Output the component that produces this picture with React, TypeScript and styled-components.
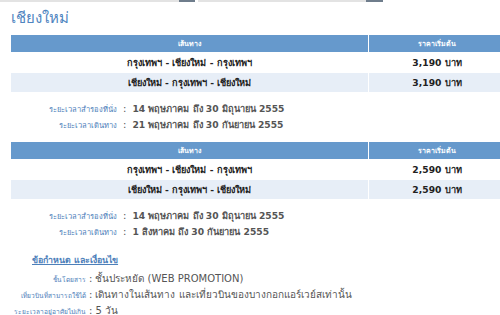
import React from 'react';
import styled, { createGlobalStyle } from 'styled-components';

const GlobalStyle = createGlobalStyle`
  html, body {
    margin: 0;
    padding: 0;
    background: #ffffff;
    overflow: hidden;
  }
  body {
    font-family: "DejaVu Sans", "Noto Sans", sans-serif;
    font-size: 10px;
    color: #555555;
  }
`;

const TopStrip = styled.div`
  display: flex;
  height: 2px;
`;

const StripField = styled.div<{ $w: number; $ml?: number }>`
  width: ${(p) => p.$w}px;
  margin-left: ${(p) => p.$ml || 0}px;
  background: #e3e3e3;
`;

const StripButton = styled.div<{ $w: number }>`
  width: ${(p) => p.$w}px;
  background: #6f7d8c;
`;

const Page = styled.div`
  width: 520px;
  padding-left: 11px;
`;

const Title = styled.h1`
  margin: 2px 0 1px;
  font-size: 15px;
  line-height: 29px;
  font-weight: normal;
  color: #4f85c0;
`;

const FareTable = styled.table`
  border-collapse: separate;
  border-spacing: 1px;
  margin-left: -1px;
  width: 496px;
`;

const HeadCell = styled.th<{ $w?: number }>`
  background: #6699cc;
  color: #ffffff;
  font-size: 7px;
  font-weight: bold;
  height: 17px;
  line-height: 12px;
  padding: 0;
  text-align: center;
  width: ${(p) => (p.$w ? `${p.$w}px` : 'auto')};
`;

const Row = styled.tr<{ $alt?: boolean }>`
  background: ${(p) => (p.$alt ? '#e7eef7' : '#ffffff')};
`;

const Cell = styled.td`
  height: 19px;
  line-height: 14px;
  padding: 0;
  text-align: center;
  font-weight: bold;
  font-size: 9.2px;
  color: #222222;
`;

const InfoGrid = styled.div<{ $labelW: number; $row: number }>`
  display: grid;
  grid-template-columns: ${(p) => p.$labelW}px auto 1fr;
  grid-auto-rows: ${(p) => p.$row}px;
  align-items: baseline;
  line-height: ${(p) => p.$row}px;
  margin: 8px 0 8px;
`;

const Label = styled.div<{ $size: number }>`
  text-align: right;
  color: #4d80ba;
  font-size: ${(p) => p.$size}px;
  white-space: nowrap;
`;

const Colon = styled.div<{ $pad: number }>`
  padding: 0 ${(p) => p.$pad}px;
  color: #555555;
`;

const Value = styled.div<{ $bold?: boolean }>`
  color: #555555;
  font-weight: ${(p) => (p.$bold ? 'bold' : 'normal')};
  font-size: ${(p) => (p.$bold ? '9.2px' : '10px')};
  white-space: nowrap;
`;

const TermsHeading = styled.div`
  margin: 13px 0 0 21px;
  line-height: 15px;
  font-weight: bold;
  color: #4d80ba;
  text-decoration: underline;
  font-size: 8.8px;
`;

const TermsGrid = styled(InfoGrid)`
  margin: 3px 0 0;
`;

interface Fare {
  route: string;
  price: string;
}

interface Section {
  fares: Fare[];
  booking: string;
  travel: string;
}

const sections: Section[] = [
  {
    fares: [
      { route: 'กรุงเทพฯ - เชียงใหม่ - กรุงเทพฯ', price: '3,190 บาท' },
      { route: 'เชียงใหม่ - กรุงเทพฯ - เชียงใหม่', price: '3,190 บาท' },
    ],
    booking: '14 พฤษภาคม ถึง 30 มิถุนายน 2555',
    travel: '21 พฤษภาคม ถึง 30 กันยายน 2555',
  },
  {
    fares: [
      { route: 'กรุงเทพฯ - เชียงใหม่ - กรุงเทพฯ', price: '2,590 บาท' },
      { route: 'เชียงใหม่ - กรุงเทพฯ - เชียงใหม่', price: '2,590 บาท' },
    ],
    booking: '14 พฤษภาคม ถึง 30 มิถุนายน 2555',
    travel: '1 สิงหาคม ถึง 30 กันยายน 2555',
  },
];

const terms = [
  { label: 'ชั้นโดยสาร', value: 'ชั้นประหยัด (WEB PROMOTION)' },
  {
    label: 'เที่ยวบินที่สามารถใช้ได้',
    value: 'เดินทางในเส้นทาง และเที่ยวบินของบางกอกแอร์เวย์สเท่านั้น',
  },
  { label: 'ระยะเวลาอยู่อาศัยไม่เกิน', value: '5 วัน' },
];

const App = () => {
  return (
    <>
      <GlobalStyle />
      <TopStrip>
        <StripField $w={179} />
        <StripButton $w={16} />
        <StripField $w={168} $ml={3} />
        <StripButton $w={17} />
      </TopStrip>
      <Page>
        <Title>เชียงใหม่</Title>
        {sections.map((section, i) => (
          <div key={i}>
            <FareTable>
              <thead>
                <tr>
                  <HeadCell>เส้นทาง</HeadCell>
                  <HeadCell $w={136}>ราคาเริ่มต้น</HeadCell>
                </tr>
              </thead>
              <tbody>
                {section.fares.map((fare, j) => (
                  <Row key={j} $alt={j % 2 === 1}>
                    <Cell>{fare.route}</Cell>
                    <Cell>{fare.price}</Cell>
                  </Row>
                ))}
              </tbody>
            </FareTable>
            <InfoGrid $labelW={106} $row={16}>
              <Label $size={7.6}>ระยะเวลาสำรองที่นั่ง</Label>
              <Colon $pad={6}>:</Colon>
              <Value $bold>{section.booking}</Value>
              <Label $size={7.6}>ระยะเวลาเดินทาง</Label>
              <Colon $pad={6}>:</Colon>
              <Value $bold>{section.travel}</Value>
            </InfoGrid>
          </div>
        ))}
        <TermsHeading>ข้อกำหนด และเงื่อนไข</TermsHeading>
        <TermsGrid $labelW={75} $row={16}>
          {terms.map((t) => (
            <React.Fragment key={t.label}>
              <Label $size={6.6}>{t.label}</Label>
              <Colon $pad={3}>:</Colon>
              <Value>{t.value}</Value>
            </React.Fragment>
          ))}
        </TermsGrid>
      </Page>
    </>
  );
};

export default App;
